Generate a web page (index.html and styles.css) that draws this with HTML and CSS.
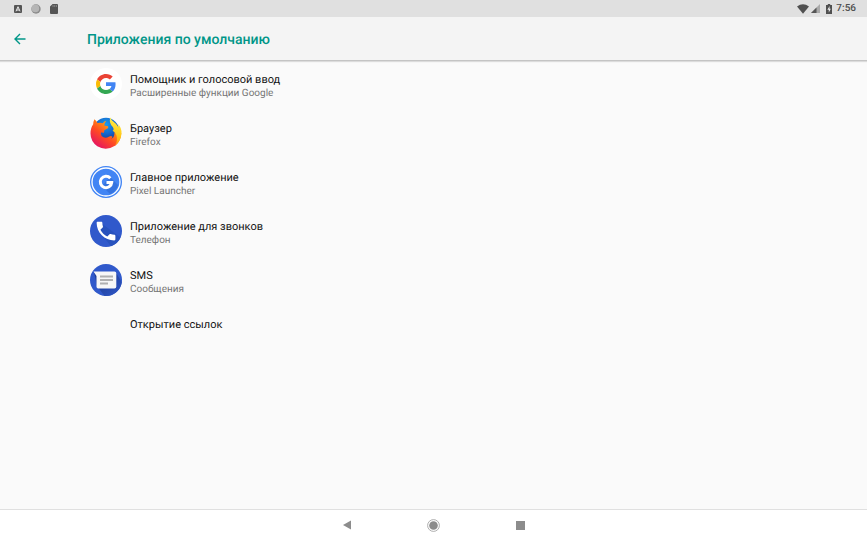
FILE: index.html
```html
<!DOCTYPE html>
<html lang="ru">
<head>
<meta charset="utf-8">
<meta name="viewport" content="width=device-width, initial-scale=1">
<title>Приложения по умолчанию</title>
<link rel="stylesheet" href="styles.css">
</head>
<body>
<svg class="defs" aria-hidden="true">
  <defs>
    <radialGradient id="globe" cx=".5" cy=".25" r=".8"><stop offset="0" stop-color="#1a9cf0"/><stop offset=".5" stop-color="#1460c6"/><stop offset="1" stop-color="#252060"/></radialGradient>
    <linearGradient id="fox" x1=".85" y1=".1" x2=".2" y2=".9"><stop offset="0" stop-color="#ffb81c"/><stop offset=".3" stop-color="#ff8a16"/><stop offset=".6" stop-color="#ff4b22"/><stop offset="1" stop-color="#e6175f"/></linearGradient>
    <linearGradient id="flame" x1=".5" y1="0" x2=".4" y2="1"><stop offset="0" stop-color="#fff04a"/><stop offset=".6" stop-color="#ffc918"/><stop offset="1" stop-color="#ff981b"/></linearGradient>
    <linearGradient id="shade" x1="0" y1="0" x2="1" y2="1"><stop offset=".35" stop-color="#20409c"/><stop offset="1" stop-color="#3059cb"/></linearGradient>
  </defs>
</svg>

<div class="status">
  <div class="status-group">
    <svg width="8" height="8" viewBox="0 0 8 8"><rect width="8" height="8" rx="1" fill="#555"/><path d="M2 6.3 4 1.7 6 6.3M2.8 5h2.4" fill="none" stroke="#eee"/></svg>
    <svg width="10" height="10" viewBox="0 0 10 10"><circle cx="5" cy="5" r="4.7" fill="#8c8c8c"/><circle cx="4.4" cy="4.4" r="3.8" fill="#b5b5b5"/></svg>
    <svg width="8" height="10" viewBox="0 0 8 10"><path d="M2.6 0H7q1 0 1 1v8q0 1-1 1H1q-1 0-1-1V2.6z" fill="#555"/><path d="M3 1v2M4.7 1v2M6.4 1v2" stroke="#999" stroke-width=".7"/></svg>
  </div>
  <div class="status-group status-right">
    <svg width="12" height="10" viewBox="0 0 12 10"><path d="M0 2.4Q6-1.8 12 2.4L6 9.8z" fill="#505050"/></svg>
    <svg width="9" height="9" viewBox="0 0 9 9"><path d="M9 0v9H0z" fill="#aaa"/><path d="M5.5 3.5V9H0z" fill="#555"/></svg>
    <svg class="battery" width="6" height="10" viewBox="0 0 6 10"><path d="M1.8 0h2.4v1H6v9H0V1h1.8z" fill="#505050"/><path d="M3.6 2 1.4 5.8h1.4V8.6L4.8 4.8H3.5z" fill="#eee"/></svg>
    <time>7:56</time>
  </div>
</div>

<header class="bar">
  <button class="back" type="button" aria-label="Назад">
    <svg width="12" height="12" viewBox="0 0 12 12"><path d="M11.5 6H1.2M6 1 1 6l5 5" fill="none" stroke="#009688" stroke-width="1.4"/></svg>
  </button>
  <h1>Приложения по умолчанию</h1>
</header>

<main>
  <ul class="list">
    <li><a class="row" href="#assist">
      <svg class="icon" viewBox="0 0 32 32"><circle cx="16" cy="16" r="16" fill="#fff"/><svg x="6" y="6" width="20" height="20" viewBox="0 0 48 48"><path fill="#ea4335" d="M24 9.5c3.54 0 6.71 1.22 9.21 3.6l6.85-6.85C35.9 2.38 30.47 0 24 0 14.62 0 6.51 5.38 2.56 13.22l7.98 6.19C12.43 13.72 17.74 9.5 24 9.5z"/><path fill="#4285f4" d="M46.98 24.55c0-1.57-.15-3.09-.38-4.55H24v9.02h12.94c-.58 2.96-2.26 5.48-4.78 7.18l7.73 6c4.51-4.18 7.09-10.36 7.09-17.65z"/><path fill="#fbbc05" d="M10.53 28.59A14.5 14.5 0 0 1 9.77 24c0-1.6.27-3.14.76-4.59l-7.98-6.19A23.9 23.9 0 0 0 0 24c0 3.88.92 7.54 2.56 10.78z"/><path fill="#34a853" d="M24 48c6.48 0 11.93-2.13 15.89-5.81l-7.73-6c-2.15 1.45-4.92 2.3-8.16 2.3-6.26 0-11.57-4.22-13.47-9.91l-7.98 6.19C6.51 42.62 14.62 48 24 48z"/></svg></svg>
      <span class="text"><span class="name">Помощник и голосовой ввод</span><span class="value">Расширенные функции Google</span></span>
    </a></li>
    <li><a class="row" href="#browser">
      <svg class="icon" viewBox="0 0 32 32"><circle cx="16" cy="14" r="13.200" fill="url(#globe)"/><path fill="url(#fox)" d="M4.400 2.200Q6 3.500 7.500 6q2.700-.8 5.200.2Q14.200 4 16.300 3.700q-2 2.300-2 4.800l3.700.8q.7 1.200-.5 2.200l-3.200 1.800-.3 2.400-3-.3q-.5 3.600 2.500 4.900 2.700 1.100 5.300-.6 2.300-1.300 3.400-.2.600 1-1.200 2.200Q24.500 21 24.500 15l6.800 1Q31 24 25.500 28.500 16 34.500 7.300 29.200.6 24.500.5 16.500q0-5.700 2.700-9.300.1-2.700 1.200-5z"/><path fill="url(#flame)" d="M20.500.3q.5 2.500 2.500 4 4.100 2.900 5.600 6.200.1-2-.5-3.600 3.800 4 3.400 9.600Q31 24 25 28.700q3-5 1.500-10.200-1-3.500-4-4.700 2-1.200.3-3.900Q18.300 5.800 20.500.3z"/></svg>
      <span class="text"><span class="name">Браузер</span><span class="value">Firefox</span></span>
    </a></li>
    <li><a class="row" href="#home">
      <svg class="icon" viewBox="0 0 32 32"><circle cx="16" cy="16" r="16" fill="#4285f4"/><circle cx="16" cy="16" r="14" fill="#4285f4" stroke="#fff" stroke-width="1.3"/><path d="m20 11 8 8A13 13 0 0 1 20 28l-8-8z" fill="#3574e0"/><path d="M20.300 12.200A5.700 5.700 0 1 0 21.700 16.500H16.500" fill="none" stroke="#fff" stroke-width="3"/></svg>
      <span class="text"><span class="name">Главное приложение</span><span class="value">Pixel Launcher</span></span>
    </a></li>
    <li><a class="row" href="#phone">
      <svg class="icon" viewBox="0 0 32 32"><circle cx="16" cy="16" r="16" fill="#3059cb"/><path d="m11 8 19.500 14.500A16 16 0 0 1 21 31.200L8 15z" fill="#2852bd"/><svg x="3.500" y="3.500" width="25" height="25" viewBox="0 0 24 24"><path fill="#fff" d="M6.620 10.790c1.440 2.830 3.760 5.140 6.590 6.590l2.200-2.200c.27-.27.67-.36 1.020-.24 1.120.37 2.330.57 3.570.57.55 0 1 .45 1 1V20c0 .55-.45 1-1 1-9.390 0-17-7.610-17-17 0-.55.45-1 1-1h3.500c.55 0 1 .45 1 1 0 1.250.2 2.450.57 3.570.11.35.03.74-.25 1.020z"/></svg></svg>
      <span class="text"><span class="name">Приложение для звонков</span><span class="value">Телефон</span></span>
    </a></li>
    <li><a class="row" href="#sms">
      <svg class="icon" viewBox="0 0 32 32"><circle cx="16" cy="16" r="16" fill="#3059cb"/><path d="M4 8.500 7 22l7.500 9.900A16 16 0 0 0 31.800 18L26 9z" fill="url(#shade)"/><path d="M3.500 7.500H24.500q1.800 0 1.800 1.800v13.400q0 1.800-1.800 1.800H8.300q-1.800 0-1.800-1.800V12z" fill="#f7f7f7"/><path d="M10 12.500h13M10 16h13M10 19.500h8" stroke="#b0b0b0" stroke-width="1.900"/></svg>
      <span class="text"><span class="name">SMS</span><span class="value">Сообщения</span></span>
    </a></li>
    <li><a class="row row-plain" href="#links"><span class="text"><span class="name">Открытие ссылок</span></span></a></li>
  </ul>
</main>

<nav class="nav">
  <button type="button" aria-label="Назад"><svg width="8" height="10" viewBox="0 0 8 10"><path d="M8 .5v9L0 5z" fill="#8c8c8c"/></svg></button>
  <button type="button" aria-label="Домой"><svg width="13" height="13" viewBox="0 0 13 13"><circle cx="6.500" cy="6.500" r="5.900" fill="none" stroke="#999" stroke-width=".8"/><circle cx="6.500" cy="6.500" r="4.300" fill="#8c8c8c"/></svg></button>
  <button type="button" aria-label="Обзор"><svg width="9" height="9" viewBox="0 0 9 9"><path d="M0 0h9v9H0z" fill="#8c8c8c"/></svg></button>
</nav>
</body>
</html>
```
FILE: styles.css
```css
* {
  box-sizing: border-box;
}

body {
  margin: 0;
  min-height: 100vh;
  display: flex;
  flex-direction: column;
  background: #fafafa;
  color: #111;
  font-family: Roboto, "Liberation Sans", sans-serif;
  text-rendering: geometricPrecision;
}

svg {
  display: block;
  flex: none;
}

button {
  display: flex;
  align-items: center;
  justify-content: center;
  padding: 0;
  border: 0;
  background: none;
}

.defs {
  position: absolute;
  width: 0;
  height: 0;
}

.status {
  display: flex;
  align-items: center;
  justify-content: space-between;
  height: 17px;
  padding: 0 11px 0 14px;
  background: #e0e0e0;
}

.status-group {
  display: flex;
  align-items: center;
  gap: 9px;
}

.status-right {
  gap: 2px;
}

.battery {
  margin: 0 2px 0 4px;
}

time {
  color: #505050;
  font-size: 10px;
  font-weight: 500;
  line-height: 18px;
}

.bar {
  display: flex;
  align-items: center;
  height: 44px;
  background: #f4f4f4;
  border-bottom: 1px solid #c4c4c4;
  box-shadow: 0 1px 1px #dcdcdc;
}

.back {
  width: 39px;
  height: 40px;
}

h1 {
  margin: 0 0 0 48px;
  padding-top: 2px;
  color: #009688;
  font-size: 14px;
  font-weight: 500;
  line-height: 20px;
}

main {
  flex: 1;
}

.list {
  margin: 0;
  padding: 0;
  list-style: none;
}

.row {
  display: flex;
  align-items: flex-start;
  gap: 8px;
  height: 49px;
  padding: 7px 0 0 90px;
  color: inherit;
  text-decoration: none;
}

.row-plain {
  height: 36px;
  padding-left: 130px;
}

.icon {
  width: 32px;
  height: 32px;
}

.text {
  display: flex;
  flex-direction: column;
  padding-top: 4px;
}

.name {
  font-size: 11px;
  line-height: 15px;
}

.value {
  color: #757575;
  font-size: 10px;
  line-height: 13px;
}

.nav {
  display: grid;
  grid-template-columns: repeat(3, 87px);
  justify-content: center;
  height: 33px;
  padding-bottom: 2px;
  background: #fff;
  border-top: 1px solid #e0e0e0;
}
```
